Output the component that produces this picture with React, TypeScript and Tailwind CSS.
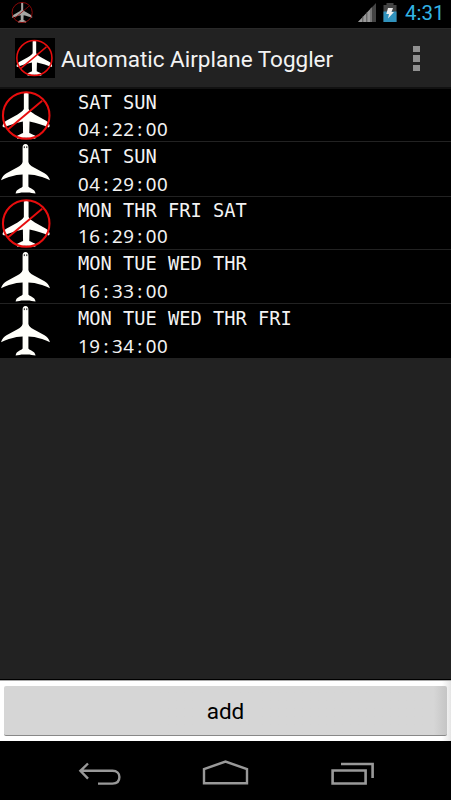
import { Fragment } from "react"

interface Alarm {
  days: string
  time: string
  blocked: boolean
}

const alarms: Alarm[] = [
  { days: "SAT SUN", time: "04:22:00", blocked: true },
  { days: "SAT SUN", time: "04:29:00", blocked: false },
  { days: "MON THR FRI SAT", time: "16:29:00", blocked: true },
  { days: "MON TUE WED THR", time: "16:33:00", blocked: false },
  { days: "MON TUE WED THR FRI", time: "19:34:00", blocked: false },
]

function PlaneIcon() {
  return (
    <svg className="block h-[54px] w-[54px] shrink-0" viewBox="0 0 54 54" aria-hidden="true">
      <path
        d="M25.5 2C27.4 2 28.4 3.5 28.4 5.5V20C29 22.5 31 24 33.5 25.3L44.5 31.2C47 32.7 49 35 50 38.2C45 35.8 39 34 34.5 33L28.4 32.6V44.5C29.5 46.5 34.8 46.5 35.6 51.6C32 50.8 28.5 50 25.5 50.6C22.5 50 19 50.8 15.6 51.6C16.2 46.5 21.5 46.5 22.6 44.5V32.6L16.5 33C12 34 6 35.8 1 38.2C2 35 4 32.7 6.5 31.2L17.5 25.3C20 24 22 22.5 22.6 20V5.5C22.6 3.5 23.6 2 25.5 2Z"
        fill="#fffffa"
      />
      <path d="M24.3 4.3v1.8M26.8 4.3v1.8" stroke="#111" strokeWidth="1" />
    </svg>
  )
}

function BlockedPlaneIcon({ className }: { className: string }) {
  return (
    <svg className={className} viewBox="0 0 54 54" aria-hidden="true">
      <path
        d="M23.8 4.3Q26 3.3 28.6 4.3V20.5C29.5 22.5 32 24.2 35 26L46 32.2C48.3 33.7 49.6 35 50.2 38L48.8 39.2C44 37 37 34.7 29.6 33.2L29.3 44.8C31 45.5 33 46.8 35.5 47.6V50.8L27.5 49.6H24.5L17 50.8V47.6C19.3 46.8 21.3 45.5 23 44.8L22.8 33.2C15.5 34.7 8.5 37 3.6 39.2L2 38C2.6 35 4 33.7 6.3 32.2L17.4 26C20.4 24.2 22.8 22.5 23.8 20.5Z"
        fill="#fffffa"
      />
      <circle cx="26.2" cy="27" r="23.7" fill="none" stroke="#e80d0d" strokeWidth="2.1" />
      <path d="M7.8 41L42.5 12" stroke="#e80d0d" strokeWidth="1.9" />
    </svg>
  )
}

function StatusBar() {
  return (
    <div className="flex h-7 items-start bg-black pl-[10.5px] pr-[7px]">
      <BlockedPlaneIcon className="mt-[1px] block h-[23px] w-[23px] opacity-65" />
      <svg className="ml-auto mt-[3px] block h-[19px] w-[18px]" viewBox="0 0 18 19" aria-hidden="true">
        <path d="M0 19L18 0V19Z" fill="#444" />
        <path d="M0 19L14 4.2V19Z" fill="#999" />
        <path d="M4.8 13.5V19M8.8 9.5V19M13 5V19" stroke="#555" strokeWidth="1" />
      </svg>
      <svg className="ml-[7px] mt-[3px] block h-[19px] w-[14px]" viewBox="0 0 14 19" aria-hidden="true">
        <path d="M3.5 0H10.5V2H13.5V19H.5V2H3.5Z" fill="#444" />
        <path d="M.5 8.5H13.5V19H.5Z" fill="#3092bd" />
        <path d="M5 5H10L8.5 9H11L5 15.5L6 11H3.3Z" fill="#eee" />
      </svg>
      <span className="ml-[8px] mt-[1px] w-[39px] whitespace-nowrap font-['Roboto',sans-serif] text-[20.5px] leading-6 text-[#33b5e5]">4:31</span>
    </div>
  )
}

function ActionBar() {
  return (
    <header className="flex h-[61px] items-center border-b-2 border-t border-b-[#111] border-t-[#292929] bg-[#222] pl-[15px] pr-[31px]">
      <div className="h-10 w-10 bg-black">
        <BlockedPlaneIcon className="block h-10 w-10" />
      </div>
      <h1 className="ml-[6px] mt-[4px] whitespace-nowrap font-['Roboto',sans-serif] text-[22.5px] text-[#f3f3f3]">
        Automatic Airplane Toggler
      </h1>
      <div className="ml-auto mt-px flex flex-col gap-[3px]">
        <span className="h-[6.5px] w-[7px] bg-[#919191]" />
        <span className="h-[6.5px] w-[7px] bg-[#919191]" />
        <span className="h-[6.5px] w-[7px] bg-[#919191]" />
      </div>
    </header>
  )
}

function AlarmTime({ time }: { time: string }) {
  return (
    <p className="h-6 whitespace-nowrap font-['Noto_Sans',sans-serif] text-[18.7px] leading-6 tracking-[0.6px]">
      {time.split(":").map((part, i) => (
        <Fragment key={i}>
          {i > 0 && <span className="inline-block w-[11.3px] text-center">:</span>}
          {part}
        </Fragment>
      ))}
    </p>
  )
}

function AlarmRow({ alarm }: { alarm: Alarm }) {
  return (
    <li
      className={`flex border-b border-[#222] bg-black text-[#f3f3f3] ${
        alarm.blocked ? "h-[53px]" : "h-[54.67px]"
      }`}
    >
      {alarm.blocked ? (
        <BlockedPlaneIcon className="block h-[53px] w-[54px] shrink-0" />
      ) : (
        <PlaneIcon />
      )}
      <div className={`ml-6 flex flex-col ${alarm.blocked ? "gap-[1.5px] pt-[2px]" : "gap-[3px] pt-[2.6px]"}`}>
        <p className="h-6 whitespace-nowrap font-['DejaVu_Sans_Mono',monospace] text-[18.7px] leading-6">
          {alarm.days}
        </p>
        <AlarmTime time={alarm.time} />
      </div>
    </li>
  )
}

function NavBar() {
  return (
    <nav className="flex h-[59px] items-start bg-black pl-[78px] pt-[18px]">
      <svg className="block h-7 w-11" viewBox="0 0 44 28" fill="none" stroke="#999" strokeWidth="2.4">
        <path d="M10 4.5L2.4 11.8L10 19.6M2.4 11.8H34.5C39 11.8 41.4 14.5 41.4 18C41.4 22 39 24.6 34.5 24.6H20" />
      </svg>
      <svg className="ml-[79px] block h-7 w-12" viewBox="0 0 48 28" fill="none" stroke="#999" strokeWidth="2.4">
        <path d="M3 24.3V10.1L24.5 2.5L46 10.1V24.3Z" />
      </svg>
      <svg className="ml-[81px] block h-7 w-11" viewBox="0 0 44 28" fill="none" stroke="#999" strokeWidth="2.6">
        <path d="M2.6 11.5H35.6V24.5H2.6ZM11 5H42.6V19" />
      </svg>
    </nav>
  )
}

export default function App() {
  return (
    <div className="flex h-[800px] w-[451px] flex-col overflow-hidden bg-[#222]">
      <StatusBar />
      <ActionBar />
      <ul>
        {alarms.map((alarm, i) => (
          <AlarmRow key={i} alarm={alarm} />
        ))}
      </ul>
      <div className="mt-auto h-[62px] border-t border-black bg-gradient-to-r from-white from-98% to-[#e4e4e4]">
        <div className="border-t border-[#aaa] px-1 pt-[5px]">
          <button className="block h-[50px] w-full rounded-[2px] border-b border-[#888] bg-gradient-to-r from-[#d6d6d6] from-97% to-[#c5c5c5] pt-[3px] font-['Roboto',sans-serif] text-[22.5px] text-black">
            add
          </button>
        </div>
      </div>
      <NavBar />
    </div>
  )
}
